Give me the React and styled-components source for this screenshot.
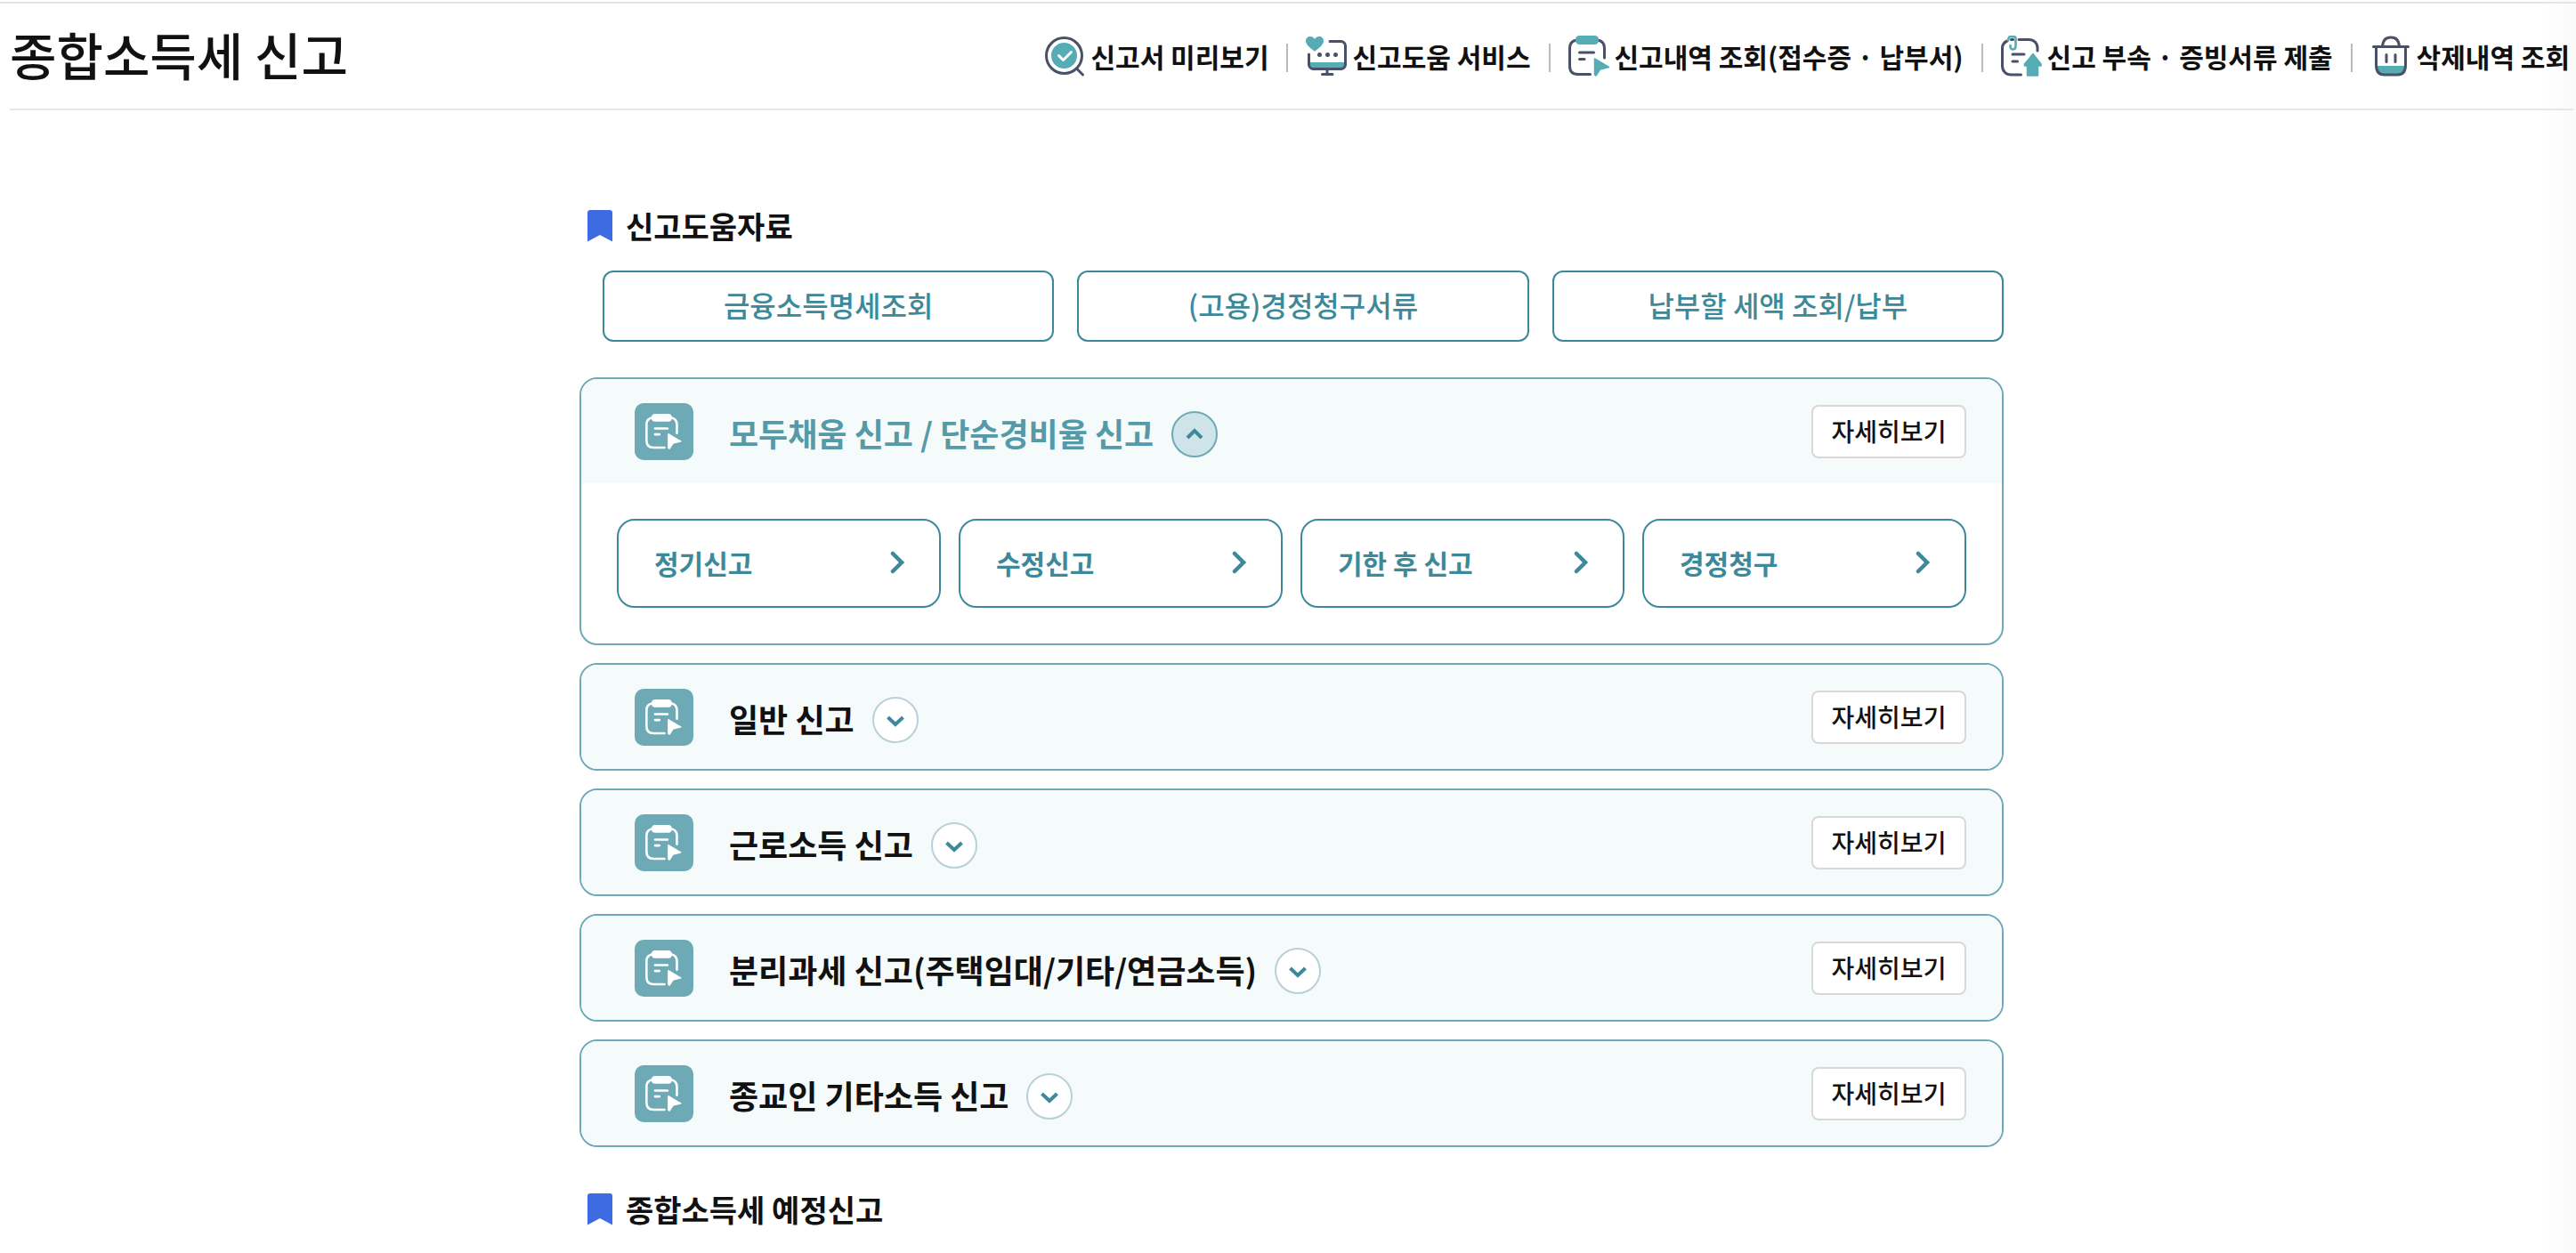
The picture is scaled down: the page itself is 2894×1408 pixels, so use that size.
import { useState } from "react";
import styled, { createGlobalStyle } from "styled-components";

const GlobalStyle = createGlobalStyle`
  * {
    box-sizing: border-box;
  }

  body {
    margin: 0;
    background: #fff;
    color: #111;
    font-family: "Noto Sans CJK KR", "Noto Sans", sans-serif;
  }

  button {
    font-family: inherit;
    cursor: pointer;
  }
`;

const Page = styled.div`
  min-height: 100vh;
  padding: 2px 3px 0 11px;
  background: linear-gradient(to left, #fafafa, #fff 40px);
`;

const TopLine = styled.div`
  height: 2px;
  margin: 0 -3px 0 -11px;
  background: #e4e4ea;
`;

const Header = styled.header`
  display: flex;
  align-items: center;
  justify-content: space-between;
  height: 120px;
  border-bottom: 2px solid #e6e6eb;
`;

const PageTitle = styled.h1`
  margin: 0;
  padding-bottom: 6px;
  font-size: 57px;
  font-weight: 500;
  line-height: 80px;
`;

const Nav = styled.nav`
  display: flex;
  align-items: center;
  padding-right: 4px;
`;

const NavLink = styled.a`
  display: flex;
  align-items: center;
  gap: 4px;
  color: #111;
  font-size: 30px;
  font-weight: 700;
  line-height: 40px;
  text-decoration: none;
  white-space: nowrap;
`;

const Divider = styled.span`
  width: 2px;
  height: 32px;
  margin: 4px 20px 0;
  background: #bbb;
`;

const Main = styled.main`
  max-width: 1600px;
  margin: 0 auto;
  padding-top: 106px;
`;

const SectionTitle = styled.h2`
  display: flex;
  align-items: center;
  gap: 14px;
  margin: 0;
  padding-left: 8px;
  font-size: 34px;
  font-weight: 700;
  line-height: 48px;
`;

const HelpList = styled.div`
  display: grid;
  grid-template-columns: repeat(3, 1fr);
  gap: 26px;
  margin: 26px 0 40px;
  padding-left: 26px;
`;

const HelpButton = styled.button`
  height: 80px;
  padding: 0 0 4px;
  border: 2px solid #3e8999;
  border-radius: 12px;
  background: #fff;
  color: #3e8999;
  font-size: 32px;
  font-weight: 500;
`;

const CardList = styled.div`
  display: flex;
  flex-direction: column;
  gap: 20px;
  margin-bottom: 46px;
`;

const Card = styled.section`
  border: 2px solid #6eaab6;
  border-radius: 20px;
  background: #fff;
  overflow: hidden;
`;

const CardHeader = styled.div`
  display: flex;
  align-items: center;
  justify-content: space-between;
  height: 117px;
  padding: 0 40px 0 60px;
  background: #f5fbfb;
`;

const CardHeading = styled.div`
  display: flex;
  align-items: center;
`;

const CardIcon = styled.span`
  display: flex;
  align-items: center;
  justify-content: center;
  width: 66px;
  height: 64px;
  margin-right: 40px;
  border-radius: 10px;
  background: #6eaab6;
`;

const CardTitle = styled.h3`
  margin: 0 20px 0 0;
  padding-top: 2px;
  color: ${({ $open }) => ($open ? "#559aa8" : "#111")};
  font-size: 36px;
  font-weight: 700;
  line-height: 48px;
`;

const ToggleButton = styled.button`
  display: flex;
  align-items: center;
  justify-content: center;
  width: 52px;
  height: 52px;
  margin-top: 6px;
  padding: 0;
  border: 2px solid ${({ $open }) => ($open ? "#6eaab6" : "#b7d1d6")};
  border-radius: 50%;
  background: ${({ $open }) => ($open ? "#cfe4e8" : "#fff")};
`;

const DetailButton = styled.button`
  height: 60px;
  width: 174px;
  padding: 0 0 2px;
  border: 2px solid #d8d8d8;
  border-radius: 8px;
  background: #fff;
  color: #111;
  font-size: 28px;
  font-weight: 500;
`;

const CardBody = styled.div`
  display: grid;
  grid-template-columns: repeat(4, 1fr);
  gap: 20px;
  padding: 40px;
`;

const ReportButton = styled.button`
  display: flex;
  align-items: center;
  justify-content: space-between;
  height: 100px;
  padding: 0 36px 2px 40px;
  border: 2px solid #3e8999;
  border-radius: 20px;
  background: #fff;
  color: #3e8999;
  font-size: 30px;
  font-weight: 700;
`;

const NAVY = "#4b5069";
const TEAL = "#55acb5";

function PreviewIcon() {
  return (
    <svg width="48" height="48" viewBox="0 0 48 48" fill="none">
      <circle cx="22.5" cy="23.5" r="20" stroke={NAVY} strokeWidth="3" />
      <circle cx="22.5" cy="23.5" r="14.5" fill={TEAL} />
      <path d="M16.5 23.5l5 5 9-9" stroke="#fff" strokeWidth="3" strokeLinecap="round" strokeLinejoin="round" />
      <path d="M37 38.5l6.5 6.5" stroke={NAVY} strokeWidth="3" strokeLinecap="round" />
    </svg>
  );
}

function ServiceIcon() {
  return (
    <svg width="48" height="48" viewBox="0 0 48 48" fill="none">
      <path d="M4 31h41v2a5 5 0 0 1-5 5H9a5 5 0 0 1-5-5z" fill={TEAL} />
      <path
        d="M27 7.500h12.500a5 5 0 0 1 5 5v21a5 5 0 0 1-5 5h-31a5 5 0 0 1-5-5V22"
        stroke={NAVY}
        strokeWidth="3"
        strokeLinecap="round"
      />
      <path d="M24 39v5M18.500 44.500h11.500" stroke={NAVY} strokeWidth="3" strokeLinecap="round" />
      <circle cx="15.500" cy="22.500" r="2.500" fill={NAVY} />
      <circle cx="24.500" cy="22.500" r="2.500" fill={NAVY} />
      <circle cx="33.500" cy="22.500" r="2.500" fill={NAVY} />
      <path d="M10 18.800C7 16 0 12 0 7c0-3 2.200-5 5-5 2.200 0 4 1 5 3 1-2 2.800-3 5-3 2.800 0 5 2 5 5 0 5-7 9-10 11.800z" fill={TEAL} />
    </svg>
  );
}

function HistoryIcon({ line = NAVY, fill = TEAL, size = 48 }) {
  return (
    <svg width={size} height={size} viewBox="0 0 48 48" fill="none">
      <path
        d="M9 6C4 7 1.500 10 1.500 15v20c0 6 3 9.500 9 9.500h14M33 6c5 1 7.500 4 7.500 9v11"
        stroke={line}
        strokeWidth="3"
        strokeLinecap="round"
      />
      <rect x="8" y="1" width="26" height="10" rx="4.500" fill={fill} />
      <path d="M12.500 20h16M12.500 27.500h5.500" stroke={line} strokeWidth="3" strokeLinecap="round" />
      <path d="M29.500 27l16 9.500-10 2.500-4.500 7-1.500-1z" fill={fill} stroke={fill} strokeWidth="1.500" strokeLinejoin="round" />
    </svg>
  );
}

function SubmitIcon() {
  return (
    <svg width="48" height="48" viewBox="0 0 48 48" fill="none">
      <path
        d="M20 5.500h11c6 0 10 4 10 9.500v3M7 7C3.500 8.500 1.500 11 1.500 15v20c0 6 4 10 10 10h11M11.500 5.500h2"
        stroke={NAVY}
        strokeWidth="3"
        strokeLinecap="round"
      />
      <path
        d="M8 6.500l.7-3c.2-.8.8-1.200 1.600-1.200h4.200c1.200 0 2 .8 2 2V13c0 4.500-6 4.500-6 .5v-1.500"
        stroke={TEAL}
        strokeWidth="2.600"
        strokeLinecap="round"
      />
      <path d="M13 22h13M13 30h5.500" stroke={NAVY} strokeWidth="3" strokeLinecap="round" />
      <path d="M36 21.500l9 11.500v2h-3.500v11h-12V35H26.500v-2z" fill={TEAL} stroke={TEAL} strokeWidth="1.500" strokeLinejoin="round" />
    </svg>
  );
}

function TrashIcon() {
  return (
    <svg width="48" height="48" viewBox="0 0 48 48" fill="none">
      <path d="M6 35h34c0 7-3 10-9 10H15c-6 0-9-3-9-10z" fill={TEAL} />
      <path
        d="M3.500 13.500h39M6.500 13.500V34c0 7 3 11 9 11h15c6 0 9-4 9-11V13.500M13.500 13C14 6.500 17.500 3 23 3s9 3.500 9.500 10M18 22.500v8M28 22.500v8"
        stroke={NAVY}
        strokeWidth="3"
        strokeLinecap="round"
      />
    </svg>
  );
}

function BookmarkIcon() {
  return (
    <svg width="30" height="36" viewBox="0 0 30 36">
      <path d="M4 0h22a3 3 0 0 1 3 3v32.500L15 28 1 35.500V3a3 3 0 0 1 3-3z" fill="#3d6be2" />
    </svg>
  );
}

function ToggleArrow({ open }) {
  return (
    <svg width="24" height="24" viewBox="0 0 24 24" fill="none">
      <path
        d={open ? "M4 16l8-8 8 8" : "M3.500 9l8.500 8 8.500-8"}
        stroke="#3e8999"
        strokeWidth="4"
      />
    </svg>
  );
}

function RightArrow() {
  return (
    <svg width="20" height="26" viewBox="0 0 20 26" fill="none">
      <path d="M4 3l10 10L4 23" stroke="#3e8999" strokeWidth="4.500" strokeLinecap="round" />
    </svg>
  );
}

const navItems = [
  { label: "신고서 미리보기", Icon: PreviewIcon },
  { label: "신고도움 서비스", Icon: ServiceIcon },
  { label: "신고내역 조회(접수증 · 납부서)", Icon: HistoryIcon },
  { label: "신고 부속 · 증빙서류 제출", Icon: SubmitIcon },
  { label: "삭제내역 조회", Icon: TrashIcon },
];

const helpItems = ["금융소득명세조회", "(고용)경정청구서류", "납부할 세액 조회/납부"];

const reportItems = ["정기신고", "수정신고", "기한 후 신고", "경정청구"];

const cards = [
  "모두채움 신고 / 단순경비율 신고",
  "일반 신고",
  "근로소득 신고",
  "분리과세 신고(주택임대/기타/연금소득)",
  "종교인 기타소득 신고",
];

function ReportCard({ title, open, onToggle }) {
  return (
    <Card>
      <CardHeader>
        <CardHeading>
          <CardIcon>
            <HistoryIcon line="#fff" fill="#fff" size={42} />
          </CardIcon>
          <CardTitle $open={open}>{title}</CardTitle>
          <ToggleButton $open={open} aria-expanded={open} aria-label={title} onClick={onToggle}>
            <ToggleArrow open={open} />
          </ToggleButton>
        </CardHeading>
        <DetailButton>자세히보기</DetailButton>
      </CardHeader>
      {open && (
        <CardBody>
          {reportItems.map((item) => (
            <ReportButton key={item}>
              {item}
              <RightArrow />
            </ReportButton>
          ))}
        </CardBody>
      )}
    </Card>
  );
}

function App() {
  const [opened, setOpened] = useState(0);

  const nav = [];
  navItems.forEach(({ label, Icon }, i) => {
    if (i > 0) nav.push(<Divider key={`divider-${i}`} />);
    nav.push(
      <NavLink key={label} href="#">
        <Icon />
        {label}
      </NavLink>
    );
  });

  return (
    <>
      <GlobalStyle />
      <Page>
        <TopLine />
        <Header>
          <PageTitle>종합소득세 신고</PageTitle>
          <Nav>{nav}</Nav>
        </Header>
        <Main>
          <SectionTitle>
            <BookmarkIcon />
            신고도움자료
          </SectionTitle>
          <HelpList>
            {helpItems.map((item) => (
              <HelpButton key={item}>{item}</HelpButton>
            ))}
          </HelpList>
          <CardList>
            {cards.map((title, i) => (
              <ReportCard
                key={title}
                title={title}
                open={opened === i}
                onToggle={() => setOpened(opened === i ? -1 : i)}
              />
            ))}
          </CardList>
          <SectionTitle>
            <BookmarkIcon />
            종합소득세 예정신고
          </SectionTitle>
        </Main>
      </Page>
    </>
  );
}

export default App;
